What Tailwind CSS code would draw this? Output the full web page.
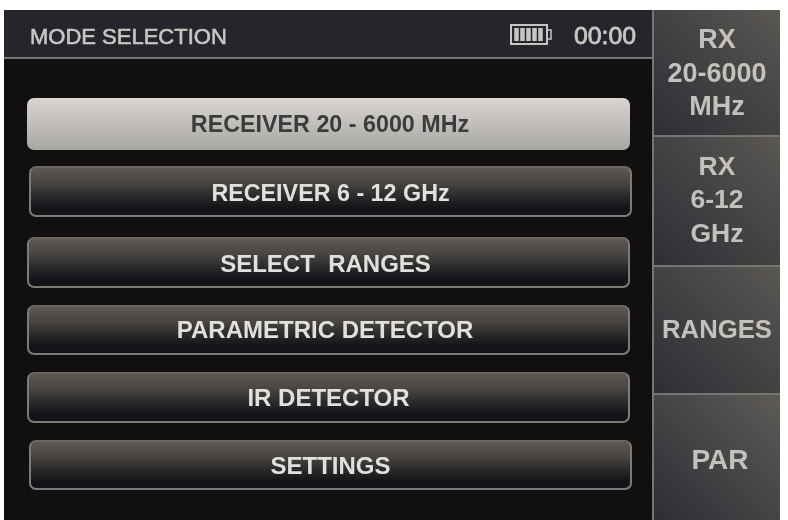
<!DOCTYPE html>
<html lang="en">
<head>
    <meta charset="UTF-8">
    <title>Mode Selection</title>
    <script src="https://cdn.jsdelivr.net/npm/@tailwindcss/browser@4"></script>
</head>
<body class="bg-white">
    <div class="w-[788px] h-[520px] pt-[10px] pl-[4px] pr-[8px] overflow-hidden font-['Liberation_Sans',sans-serif] blur-[0.5px]">
        <div class="flex h-[510px] bg-[#110f10]">

            <!-- Main screen -->
            <div class="w-[648px] shrink-0">
                <div class="h-[49px] flex items-center pl-[26px] pr-[16px] pt-[5px] bg-[#24262b] border-b-2 border-[#77756f] text-[#c9c6c1] text-[22px] [-webkit-text-stroke:0.6px]">
                    <span class="flex-1">MODE SELECTION</span>
                    <svg width="42" height="21" viewBox="0 0 42 21" class="mr-[22px] mb-[4px]" fill="none">
                        <rect x="1" y="1" width="36" height="19" stroke="#c9c6c1" stroke-width="2"/>
                        <rect x="37" y="6" width="4" height="9" stroke="#c9c6c1" stroke-width="1.5"/>
                        <path d="M6.5 4v13M12.5 4v13M18.5 4v13M24.5 4v13M30.5 4v13" stroke="#c9c6c1" stroke-width="4.5"/>
                    </svg>
                    <span class="text-[24.8px] mb-[1px] [-webkit-text-stroke:0.8px]">00:00</span>
                </div>

                <!-- Mode buttons -->
                <div class="pl-[23px] pt-[39px] text-[24px] font-bold">
                    <div class="w-[603px] h-[52px] pl-[3px] text-[23.3px] flex items-center justify-center rounded-[7px] bg-gradient-to-b from-[#d8d5d2] to-[#a9a7a4] text-[#3c3c3c]">RECEIVER 20 - 6000 MHz</div>
                    <div class="w-[603px] h-[51px] mt-[16px] ml-[2px] pt-[4px] text-[23.3px] flex items-center justify-center rounded-[7px] border-2 border-[#7d7b75] border-t-[#6a6660] bg-[linear-gradient(#5c5852,#4a4743_30%,#2a2a2c_60%,#141418_85%)] text-[#e2e0dc]">RECEIVER 6 - 12 GHz</div>
                    <div class="w-[603px] h-[51px] mt-[20px] pt-[2px] pr-[6px] flex items-center justify-center rounded-[7px] border-2 border-[#7d7b75] border-t-[#6a6660] bg-[linear-gradient(#5c5852,#4a4743_30%,#2a2a2c_60%,#141418_85%)] text-[#e2e0dc]">SELECT&nbsp; RANGES</div>
                    <div class="w-[603px] h-[50px] mt-[17px] pr-[7px] flex items-center justify-center rounded-[7px] border-2 border-[#7d7b75] border-t-[#6a6660] bg-[linear-gradient(#5c5852,#4a4743_30%,#2a2a2c_60%,#141418_85%)] text-[#e2e0dc]">PARAMETRIC DETECTOR</div>
                    <div class="w-[603px] h-[51px] mt-[17px] flex items-center justify-center rounded-[7px] border-2 border-[#7d7b75] border-t-[#6a6660] bg-[linear-gradient(#5c5852,#4a4743_30%,#2a2a2c_60%,#141418_85%)] text-[#e2e0dc]">IR DETECTOR</div>
                    <div class="w-[603px] h-[50px] mt-[17px] ml-[2px] pt-[2px] flex items-center justify-center rounded-[7px] border-2 border-[#7d7b75] border-t-[#6a6660] bg-[linear-gradient(#5c5852,#4a4743_30%,#2a2a2c_60%,#141418_85%)] text-[#e2e0dc]">SETTINGS</div>
                </div>
            </div>

            <!-- Side soft keys -->
            <div class="flex-1 flex flex-col border-l-2 border-[#77756f] text-[#c4c1bc] font-bold text-center leading-[33.5px]">
                <div class="h-[127px] pt-[13px] text-[27px] border-b-2 border-[#77756f] bg-gradient-to-tr from-[#2d2f35] to-[#5a5753]">RX<br>20-6000<br>MHz</div>
                <div class="h-[130px] pb-[2px] text-[26.5px] flex items-center justify-center border-b-2 border-[#77756f] bg-gradient-to-tr from-[#2d2f35] to-[#5a5753]"><div>RX<br>6-12<br>GHz</div></div>
                <div class="h-[128px] text-[25.7px] flex items-center justify-center border-b-2 border-[#77756f] bg-gradient-to-tr from-[#2d2f35] to-[#5a5753]">RANGES</div>
                <div class="flex-1 pt-[4px] pl-[6px] text-[28px] flex items-center justify-center bg-gradient-to-tr from-[#2d2f35] to-[#5e5b57]">PAR</div>
            </div>
        </div>
    </div>
</body>
</html>
